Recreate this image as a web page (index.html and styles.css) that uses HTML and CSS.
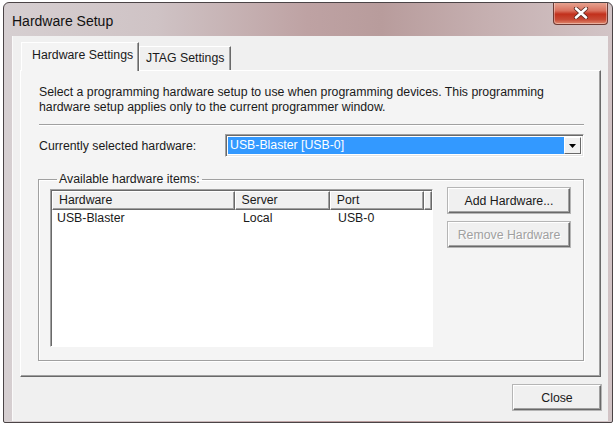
FILE: index.html
```html
<!DOCTYPE html>
<html>
<head>
<meta charset="utf-8">
<link rel="stylesheet" href="styles.css">
</head>
<body>
<div class="window">
  <div class="titlebar">
    <span class="title">Hardware Setup</span>
    <button class="close-x" aria-label="Close">
      <svg width="16" height="12" viewBox="0 0 16 12">
        <path d="M3 1.5 L13 10.5 M13 1.5 L3 10.5" stroke="#5a2a22" stroke-width="4.2" stroke-linecap="round"/>
        <path d="M3 1.5 L13 10.5 M13 1.5 L3 10.5" stroke="#ffffff" stroke-width="2.6" stroke-linecap="round"/>
      </svg>
    </button>
  </div>
  <div class="client">
    <div class="tabs">
      <div class="tab active">Hardware Settings</div>
      <div class="tab">JTAG Settings</div>
    </div>
    <div class="panel">
      <p class="desc">Select a programming hardware setup to use when programming devices. This programming<br>hardware setup applies only to the current programmer window.</p>
      <div class="sep"></div>
      <div class="row">
        <span class="label">Currently selected hardware:</span>
        <div class="combo">
          <span class="combo-sel">USB-Blaster [USB-0]</span>
          <span class="combo-btn">
            <svg width="7" height="4" viewBox="0 0 7 4"><path d="M0 0 H7 L3.5 4 Z" fill="#000"/></svg>
          </span>
        </div>
      </div>
      <fieldset class="group">
        <legend>Available hardware items:</legend>
        <div class="group-body">
          <div class="list">
            <div class="list-head">
              <div class="hcell c1">Hardware</div>
              <div class="hcell c2">Server</div>
              <div class="hcell c3">Port</div>
              <div class="hcell c4"></div>
            </div>
            <div class="list-row">
              <div class="cell c1">USB-Blaster</div>
              <div class="cell c2">Local</div>
              <div class="cell c3">USB-0</div>
            </div>
          </div>
          <div class="btns">
            <button class="btn">Add Hardware...</button>
            <button class="btn disabled">Remove Hardware</button>
          </div>
        </div>
      </fieldset>
    </div>
    <div class="footer">
      <button class="btn close">Close</button>
    </div>
  </div>
</div>
</body>
</html>
```

FILE: styles.css
```css
html, body {
  margin: 0;
  padding: 0;
  background: #ffffff;
}
body {
  font-family: "Liberation Sans", Arial, sans-serif;
  font-size: 12.3px;
  color: #1a1a1a;
}
.window {
  margin: 2px 0 0 3px;
  width: 610px;
  height: 421px;
  box-sizing: border-box;
  border: 1px solid #4b4446;
  border-radius: 6px 6px 2px 2px;
  background: linear-gradient(90deg, #d6cfd1 0%, #cfc3c5 25%, #bea2a3 50%, #b89c9c 62%, #c6b0b1 80%, #d2c4c6 100%);
  display: flex;
  flex-direction: column;
  overflow: hidden;
}
.titlebar {
  height: 33px;
  display: flex;
  align-items: flex-start;
  flex-shrink: 0;
}
.title {
  font-family: "Liberation Sans", Arial, sans-serif;
  font-size: 14px;
  line-height: 17px;
  padding: 10px 0 0 8px;
  color: #111;
}
.close-x {
  margin: -1px 4px 0 auto;
  width: 55px;
  height: 23px;
  padding: 0;
  border: 1px solid #6e3a33;
  border-top: none;
  border-radius: 0 0 4px 4px;
  background: linear-gradient(180deg, #e8a896 0%, #d9705d 40%, #c2301c 55%, #c84a35 80%, #e08a70 100%);
  display: flex;
  align-items: center;
  justify-content: center;
  box-shadow: inset 0 0 0 1px rgba(255,255,255,0.35);
}
.close-x svg { display: block; }
.client {
  flex: 1;
  margin: 0 4px 1px 8px;
  background: #f0f0f0;
  padding: 6px 7px 0 7px;
  display: flex;
  flex-direction: column;
  border-left: 1px solid #fafafa;
}
.tabs {
  display: flex;
  align-items: flex-end;
  height: 28px;
  padding-left: 1px;
}
.tab {
  box-sizing: border-box;
  height: 24px;
  line-height: 22px;
  padding: 0 6px;
  background: #f0f0f0;
  border-top: 1px solid #ffffff;
  border-left: 1px solid #ffffff;
  border-right: 1px solid #696969;
  box-shadow: inset -1px 0 #a0a0a0;
}
.tab.active {
  height: 29px;
  width: 118px;
  padding: 0 0 0 10px;
  line-height: 25px;
  margin-bottom: -1px;
  position: relative;
  z-index: 1;
  background: #f4f4f4;
}
.panel {
  box-sizing: border-box;
  height: 307px;
  background: #f4f4f4;
  border-top: 1px solid #ffffff;
  border-left: 1px solid #ffffff;
  border-right: 1px solid #696969;
  border-bottom: 1px solid #696969;
  box-shadow: inset -1px -1px #a0a0a0;
  padding: 14px 16px 0 18px;
}
.desc {
  margin: 0;
  line-height: 15px;
}
.sep {
  margin-top: 9px;
  height: 1px;
  border-top: 1px solid #a0a0a0;
  background: #ffffff;
}
.row {
  margin-top: 8px;
  display: flex;
  align-items: center;
  height: 23px;
}
.label {
  width: 186px;
  flex-shrink: 0;
}
.combo {
  flex: 1;
  box-sizing: border-box;
  height: 23px;
  background: #ffffff;
  border-top: 1px solid #a0a0a0;
  border-left: 1px solid #a0a0a0;
  border-right: 1px solid #ffffff;
  border-bottom: 1px solid #ffffff;
  box-shadow: inset 1px 1px #696969, inset -1px -1px #e3e3e3;
  padding: 2px;
  display: flex;
}
.combo-sel {
  flex: 1;
  background: #3399ff;
  color: #fff;
  line-height: 17px;
  padding-left: 2px;
}
.combo-btn {
  width: 17px;
  box-sizing: border-box;
  background: #f0f0f0;
  border-top: 1px solid #ffffff;
  border-left: 1px solid #ffffff;
  border-right: 1px solid #696969;
  border-bottom: 1px solid #696969;
  display: flex;
  align-items: center;
  justify-content: center;
}
.group {
  margin: 15px 0 0 -1px;
  padding: 2px 12px 13px 11px;
  border: 1px solid #a0a0a0;
  box-shadow: inset 1px 1px #ffffff, 1px 1px #ffffff;
  min-width: 0;
}
.group legend {
  margin-left: 7px;
  padding: 0 2px 0 2px;
  line-height: 15px;
}
.group-body {
  display: flex;
  align-items: flex-start;
}
.list {
  box-sizing: border-box;
  width: 383px;
  height: 158px;
  background: #ffffff;
  border-top: 1px solid #a0a0a0;
  border-left: 1px solid #a0a0a0;
  border-right: 1px solid #ffffff;
  border-bottom: 1px solid #ffffff;
  box-shadow: inset 1px 1px #696969;
  padding: 1px 0 0 1px;
  overflow: hidden;
}
.list-head {
  display: flex;
  height: 19px;
  background: #f0f0f0;
}
.hcell {
  box-sizing: border-box;
  height: 19px;
  line-height: 17px;
  padding-left: 6px;
  border-top: 1px solid #ffffff;
  border-left: 1px solid #ffffff;
  border-right: 1px solid #696969;
  border-bottom: 1px solid #696969;
  box-shadow: inset -1px -1px #a0a0a0;
}
.c1 { width: 184px; }
.c2 { width: 96px; }
.c3 { width: 95px; }
.c4 { flex: 1; }
.list-row {
  display: flex;
  height: 16px;
  line-height: 16px;
}
.cell {
  box-sizing: border-box;
  padding-left: 5px;
}
.cell.c2 { padding-left: 7px; }
.cell.c3 { padding-left: 6px; }
.btns {
  margin-left: 15px;
  margin-top: -1px;
  width: 122px;
  display: flex;
  flex-direction: column;
  gap: 9px;
}
.btn {
  box-sizing: border-box;
  height: 25px;
  font-family: "Liberation Sans", Arial, sans-serif;
  font-size: 12.3px;
  color: #1a1a1a;
  background: #f0f0f0;
  border-top: 1px solid #ffffff;
  border-left: 1px solid #ffffff;
  border-right: 1px solid #696969;
  border-bottom: 1px solid #696969;
  box-shadow: inset -1px -1px #a0a0a0, 0 0 0 1px #b5b5b5;
  padding: 0;
}
.btn.disabled {
  color: #a0a0a0;
  text-shadow: 1px 1px #ffffff;
}
.footer {
  display: flex;
  justify-content: flex-end;
  padding-top: 8px;
}
.btn.close {
  width: 88px;
}
```
